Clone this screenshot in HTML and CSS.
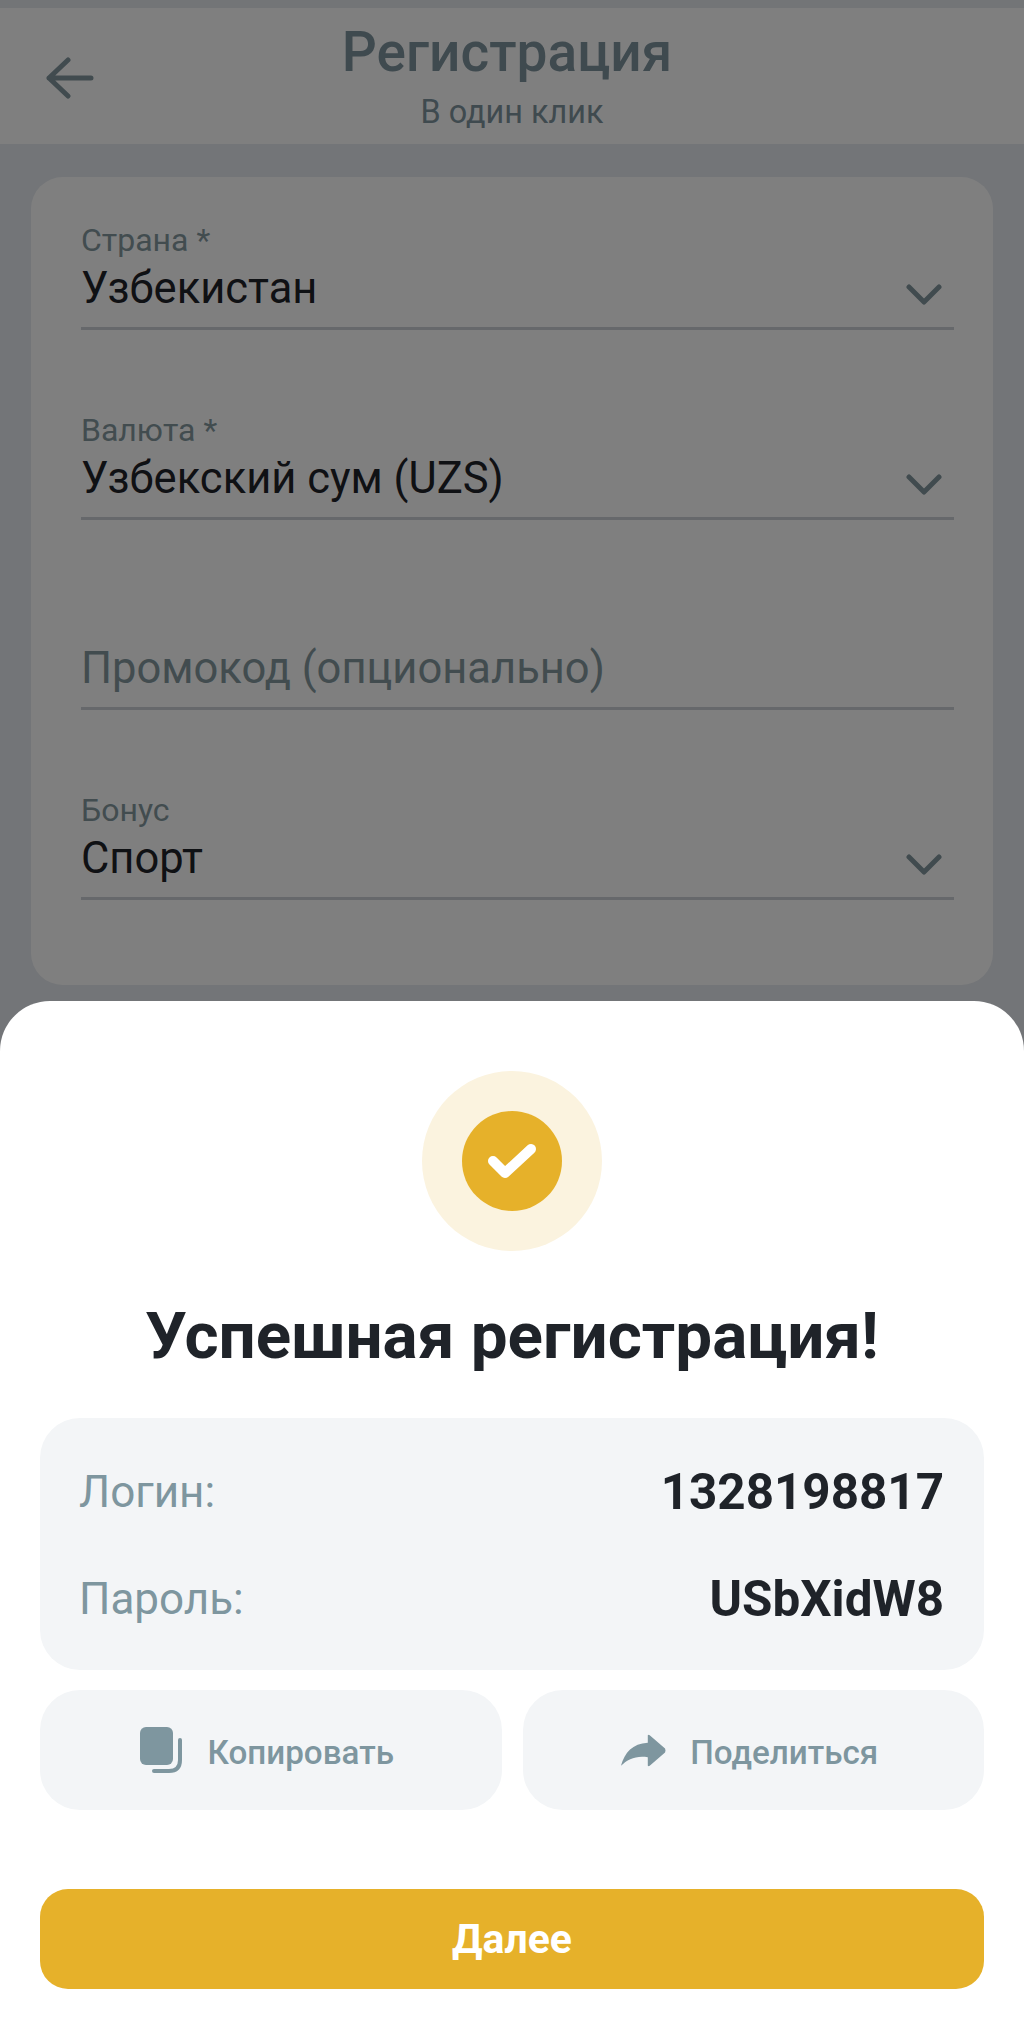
FILE: index.html
```html
<!DOCTYPE html>
<html lang="ru">
<head>
    <meta charset="UTF-8">
    <meta name="viewport" content="width=device-width, initial-scale=1.0">
    <title>Регистрация</title>
    <link rel="stylesheet" href="styles.css">
</head>
<body>
    <div class="behind">
        <div class="status-strip"></div>
        <header class="top-bar">
            <svg class="back-icon" viewBox="0 0 48 42" width="48" height="42">
                <path d="M22 3 L3 21 L22 39 M3 21 H45" fill="none" stroke="#82979f" stroke-width="5" stroke-linecap="round" stroke-linejoin="round"/>
            </svg>
            <h1 class="top-title">Регистрация</h1>
            <p class="top-sub">В один клик</p>
        </header>
        <div class="form-card">
            <div class="field">
                <span class="field-label">Страна *</span>
                <div class="field-row">
                    <span class="field-value">Узбекистан</span>
                    <svg class="chevron" viewBox="0 0 36 22" width="36" height="22"><path d="M3 3 L18 18 L33 3" fill="none" stroke="#82979f" stroke-width="5" stroke-linecap="round" stroke-linejoin="round"/></svg>
                </div>
            </div>
            <div class="field">
                <span class="field-label">Валюта *</span>
                <div class="field-row">
                    <span class="field-value">Узбекский сум (UZS)</span>
                    <svg class="chevron" viewBox="0 0 36 22" width="36" height="22"><path d="M3 3 L18 18 L33 3" fill="none" stroke="#82979f" stroke-width="5" stroke-linecap="round" stroke-linejoin="round"/></svg>
                </div>
            </div>
            <div class="field">
                <span class="field-label"></span>
                <div class="field-row">
                    <span class="field-value placeholder">Промокод (опционально)</span>
                </div>
            </div>
            <div class="field">
                <span class="field-label">Бонус</span>
                <div class="field-row">
                    <span class="field-value">Спорт</span>
                    <svg class="chevron" viewBox="0 0 36 22" width="36" height="22"><path d="M3 3 L18 18 L33 3" fill="none" stroke="#82979f" stroke-width="5" stroke-linecap="round" stroke-linejoin="round"/></svg>
                </div>
            </div>
        </div>
    </div>

    <section class="sheet">
        <div class="success-ring">
            <div class="success-dot">
                <svg viewBox="0 0 50 38" width="50" height="38"><path d="M6 19 L18 31 L44 7" fill="none" stroke="#fff" stroke-width="10" stroke-linecap="round" stroke-linejoin="round"/></svg>
            </div>
        </div>
        <h2 class="sheet-title">Успешная регистрация!</h2>
        <div class="creds">
            <div class="cred-row"><span class="cred-name">Логин:</span><span class="cred-value">1328198817</span></div>
            <div class="cred-row"><span class="cred-name">Пароль:</span><span class="cred-value">USbXidW8</span></div>
        </div>
        <div class="actions">
            <button class="action-btn">
                <svg viewBox="0 0 42 46" width="42" height="46">
                    <rect x="0" y="0" width="33" height="38" rx="6" fill="#7e969f"/>
                    <path d="M40 13 V33 Q40 44 29 44 H14" fill="none" stroke="#7e969f" stroke-width="4" stroke-linecap="round"/>
                </svg>
                <span class="action-text">Копировать</span>
            </button>
            <button class="action-btn action-share">
                <svg viewBox="0 0 48 34" width="46" height="33">
                    <path d="M1 33 C5 19 13 10 29 9 V1 Q30 0 31 1 L47 15 Q48 17 47 19 L31 33 Q30 34 29 33 V24 C17 22 8 26 1 33 Z" fill="#7e969f"/>
                </svg>
                <span class="action-text">Поделиться</span>
            </button>
        </div>
        <button class="next-btn">Далее</button>
    </section>
</body>
</html>
```

FILE: styles.css
```css
* {
    box-sizing: border-box;
}
html, body {
    margin: 0;
    padding: 0;
}
body {
    width: 1024px;
    height: 2022px;
    overflow: hidden;
    background-color: #737578;
    font-family: Roboto, "Noto Sans", sans-serif;
}

/* everything under the sheet, dimmed by the ::after layer */
.behind {
    position: relative;
    height: 1001px;
    overflow: hidden;
    background-color: #e7ebf0;
}
.behind::after {
    content: "";
    position: absolute;
    inset: 0;
    background-color: rgba(0, 0, 0, 0.5);
}
.status-strip {
    height: 8px;
    background-color: #e6eaee;
}
.top-bar {
    position: relative;
    height: 136px;
    background-color: #ffffff;
    text-align: center;
}
.back-icon {
    position: absolute;
    left: 46px;
    top: 49px;
}
.top-title {
    margin: 0;
    padding-top: 12px;
    padding-right: 10px;
    font-size: 55px;
    line-height: 64px;
    font-weight: 500;
    color: #7f949e;
}
.top-sub {
    margin: 10px 0 0;
    font-size: 32.4px;
    line-height: 36px;
    color: #7f949e;
}

.form-card {
    margin: 33px 31px 0;
    height: 808px;
    padding: 45px 39px 0 50px;
    background-color: #ffffff;
    border-radius: 32px;
}
.field {
    height: 190px;
}
.field-label {
    display: block;
    height: 36px;
    font-size: 32px;
    line-height: 36px;
    color: #84999f;
}
.field-row {
    display: flex;
    justify-content: space-between;
    align-items: center;
    height: 72px;
    padding: 0 12px 0 0;
    border-bottom: 3px solid #cdd1d6;
}
.field-value {
    font-size: 43.5px;
    line-height: 48px;
    color: #1f2329;
    padding-bottom: 8px;
}
.field-value.placeholder {
    color: #84999f;
}
.chevron {
    margin-top: 4px;
}

.sheet {
    height: 1021px;
    padding: 70px 40px 0;
    background-color: #ffffff;
    border-radius: 50px 50px 0 0;
}
.success-ring {
    display: flex;
    align-items: center;
    justify-content: center;
    width: 180px;
    height: 180px;
    margin: 0 auto;
    border-radius: 50%;
    background-color: #fbf3df;
}
.success-dot {
    display: flex;
    align-items: center;
    justify-content: center;
    width: 100px;
    height: 100px;
    border-radius: 50%;
    background-color: #e6b12a;
}
.sheet-title {
    margin: 47px 0 0;
    font-size: 65.6px;
    line-height: 76px;
    font-weight: 700;
    text-align: center;
    color: #1f2329;
}
.creds {
    height: 252px;
    margin-top: 44px;
    padding: 46px 40px 0 39px;
    background-color: #f3f5f7;
    border-radius: 40px;
}
.cred-row {
    display: flex;
    justify-content: space-between;
    align-items: center;
    height: 56px;
    margin-bottom: 51px;
}
.cred-name {
    font-size: 44px;
    color: #7e969f;
}
.cred-value {
    font-size: 49.4px;
    font-weight: 700;
    color: #1f2329;
}
.actions {
    display: flex;
    gap: 21px;
    margin-top: 20px;
}
.action-btn {
    display: flex;
    flex: 1;
    align-items: center;
    justify-content: center;
    gap: 26px;
    height: 120px;
    padding: 0 8px 0 0;
    border: none;
    border-radius: 40px;
    background-color: #f3f5f7;
    font-family: inherit;
    font-size: 33.2px;
    font-weight: 500;
    color: #7e969f;
}
.action-share {
    gap: 24px;
}
.action-text {
    padding-top: 5px;
}
.next-btn {
    display: block;
    width: 100%;
    height: 100px;
    margin-top: 79px;
    border: none;
    border-radius: 28px;
    background-color: #e6b12a;
    font-family: inherit;
    font-size: 41px;
    font-weight: 700;
    color: #ffffff;
}
```
